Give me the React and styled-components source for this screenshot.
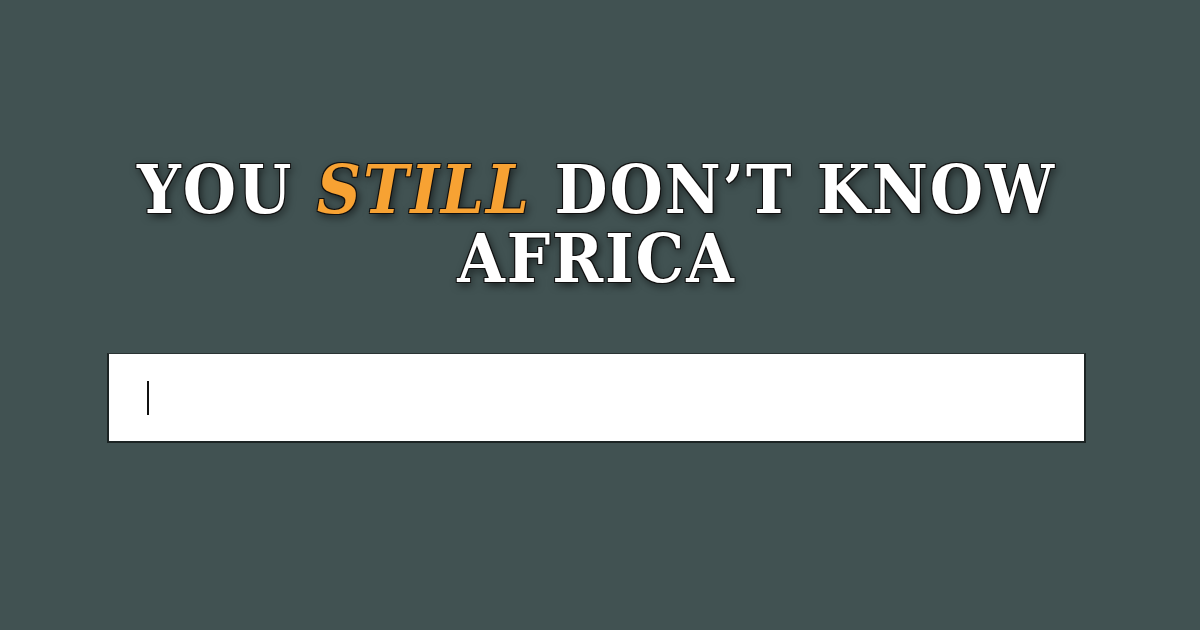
import React from "react";
import styled, { createGlobalStyle } from "styled-components";

const Global = createGlobalStyle`
  html, body {
    margin: 0;
    padding: 0;
    background: #415252;
    height: 100%;
  }
`;

const Page = styled.main`
  width: 1200px;
  height: 630px;
  background: #415252;
  display: flex;
  flex-direction: column;
  align-items: center;
  padding: 155px 7px 0 0;
  box-sizing: border-box;
`;

const Title = styled.h1`
  margin: 0;
  width: 1000px;
  text-align: center;
  font-family: "DejaVu Serif Condensed", "DejaVu Serif", serif;
  font-stretch: condensed;
  font-weight: bold;
  font-size: 68px;
  line-height: 69px;
  letter-spacing: 2px;
  color: #fff;
  text-transform: uppercase;
  text-shadow: 1px 1px 0 #111, -1px -1px 0 #111, 1px -1px 0 #111,
    -1px 1px 0 #111, 2px 3px 8px rgba(0, 0, 0, 0.65);
`;

const Accent = styled.em`
  color: #f7a233;
  font-style: italic;
`;

const Field = styled.div`
  position: relative;
  margin-top: 60px;
  width: 979px;
  height: 90px;
`;

const Search = styled.input`
  display: block;
  width: 100%;
  height: 100%;
  box-sizing: border-box;
  border: none;
  border-left: 2px solid #1c2424;
  border-right: 2px solid #1c2424;
  border-bottom: 2px solid #1c2424;
  border-top: 1px solid #2a3333;
  padding: 0 0 0 40px;
  font-family: "Liberation Sans", sans-serif;
  font-size: 40px;
  color: #222;
  background: #fff;
  outline: none;
  caret-color: transparent;
`;

const Caret = styled.span`
  position: absolute;
  left: 40px;
  top: 28px;
  width: 2px;
  height: 34px;
  background: #111;
  pointer-events: none;
`;

export default function App() {
  return (
    <Page>
      <Global />
      <Title>
        You <Accent>Still</Accent> Don’t Know Africa
      </Title>
      <Field>
        <Search type="text" />
        <Caret />
      </Field>
    </Page>
  );
}
